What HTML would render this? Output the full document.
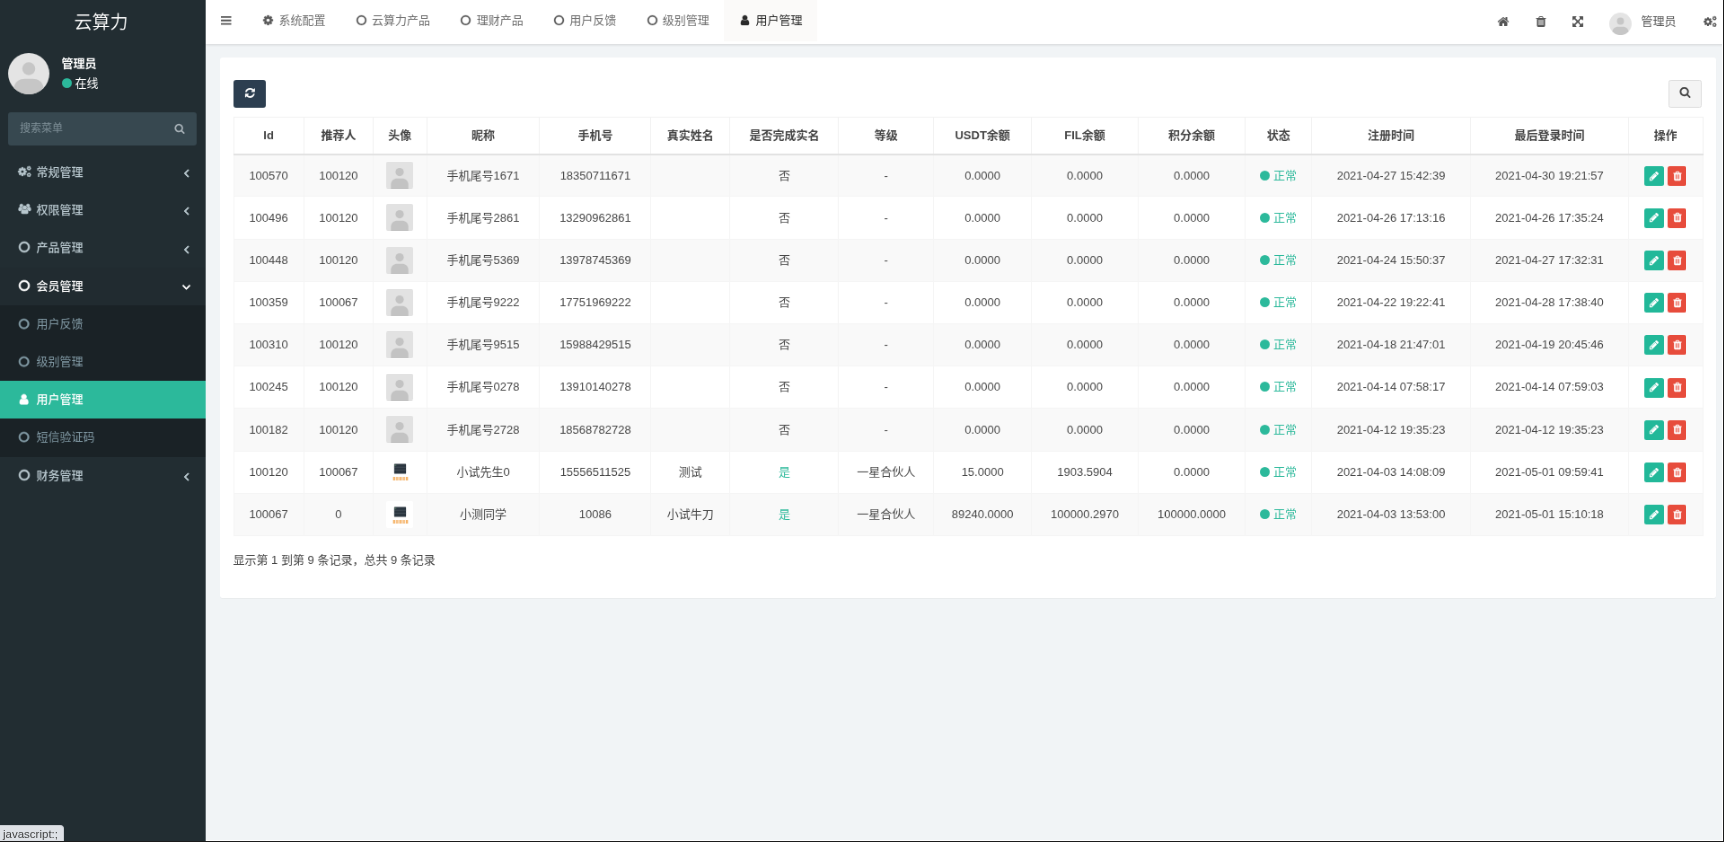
<!DOCTYPE html>
<html lang="zh-CN">
<head>
<meta charset="utf-8">
<title>云算力</title>
<style>
*{box-sizing:border-box}
html,body{margin:0;padding:0;width:1724px;height:842px;overflow:hidden;background:#f1f4f6}
body{font-family:"Liberation Sans","Noto Sans CJK SC",sans-serif;font-size:13px;line-height:1.42857;color:#444;position:relative}
ul{list-style:none;margin:0;padding:0}
a{text-decoration:none;color:inherit;cursor:pointer}
svg.ic{display:inline-block;vertical-align:middle;overflow:visible}
.smenu svg.ic{stroke:currentColor;stroke-width:70px}
.smenu .arr svg.ic{stroke-width:110px}
#stage{position:absolute;left:0;top:0;width:1926px;height:940px;transform:scale(0.898);transform-origin:0 0;overflow:hidden;will-change:transform}
/* window edges */
#edge-r{position:absolute;right:0;top:0;width:1px;height:842px;background:#1b1b1b;z-index:50}
#edge-r2{position:absolute;right:1px;top:0;width:1px;height:842px;background:#fff;z-index:49}
#edge-b{position:absolute;left:0;bottom:0;width:1724px;height:1px;background:#1b1b1b;z-index:50}
#edge-b2{position:absolute;left:206px;bottom:1px;width:1518px;height:1px;background:#fff;z-index:49}
#status{will-change:transform;position:absolute;left:0;bottom:1px;height:16px;width:64px;background:#dee1e6;border-top:1px solid #c8ccd2;border-right:1px solid #c8ccd2;border-top-right-radius:4px;font-size:11.500px;line-height:16.500px;color:#444;padding-left:3px;z-index:40;font-family:"Liberation Sans",sans-serif}

/* sidebar */
.sidebar{position:absolute;left:-1px;top:0;width:230px;height:100%;background:#222d32}
.logo{height:50px;line-height:50.5px;text-align:center;padding-right:3px;font-size:20px;font-weight:350;color:#fff;background:#222d32;font-family:"Liberation Sans","Noto Sans CJK SC",sans-serif}
.upanel{position:relative;height:65px;padding:10px}
.upanel .avr{display:block;position:absolute;left:9.7px;top:8.6px}
.upanel .info{position:absolute;left:69.5px;top:9.2px;color:#fff;line-height:1}
.upanel .info p{margin:3px 0 0 0;font-weight:600;font-size:13px;line-height:18px}
.upanel .info .on{display:block;margin-top:3.6px;font-size:13px;line-height:18px;color:#fff}
.upanel .info .on i{display:inline-block;width:11px;height:11px;border-radius:50%;background:#2cb89b;margin-right:4px;vertical-align:-1px}
.sform{margin:10px 10px 9.5px 10px;height:36.6px;border-radius:3px;background:#374850;position:relative}
.sform span.ph{position:absolute;left:13px;top:0;line-height:36.6px;font-size:12px;color:#7f9098}
.sform .ic{position:absolute;right:13px;top:11.5px;color:#a9b3b9}
.smenu li a{display:block;position:relative;height:42.2px;line-height:41.4px;padding-left:18px;color:#b8c7ce;font-size:13px;font-weight:500;white-space:nowrap}
.smenu .mi{display:inline-block;width:20px;text-align:center;line-height:1}
.smenu .mi .ic{vertical-align:-2px}
.smenu .mt{margin-left:3.5px}
.smenu .arr{position:absolute;right:15.3px;top:2.1px;line-height:42.2px;color:#b8c7ce}
.smenu .arr .ic{vertical-align:-2px;width:15px;height:15px;margin-right:-1.500px}
.smenu li.open a{background:#212b30;color:#fff}
.smenu li.open .arr{color:#fff}
.smenu li.sub a{background:#1a2226;color:#8199a4;font-weight:400}
.smenu li.sub .mi .ic{width:13.3px;height:13.3px}
.smenu li.sub.cur a{background:#2cb99b;color:#fff;font-weight:500}

/* header */
.navbar{position:absolute;left:229px;top:0;right:0;height:49.100px;background:#fff;box-shadow:0 1px 3px rgba(0,0,0,.13);z-index:5}
.toggle{position:absolute;left:0;top:0;width:45px;height:48px;text-align:center;line-height:43.6px;color:#555}
.tabs{position:absolute;left:46.5px;top:0;height:48.7px;display:flex}
.tabs li{height:48.7px}
.tabs li a{display:block;height:45.700px;line-height:45.6px;padding-left:16px;color:#6e6e6e;font-size:13px;white-space:nowrap}
.tabs li a .ic{vertical-align:-2.200px;margin-left:0.700px;margin-right:5.300px;stroke:currentColor;stroke-width:30px;color:#5a5a5a}
.tabs li.active a{background:#fbfaf9;color:#2a2a2a}
.tabs li.active a .ic{color:#2a2a2a}
.hright{position:absolute;left:0;top:0;width:100%;height:48.7px;color:#555}
.hright>a{position:absolute;display:block;top:0;height:48.7px;line-height:48.7px;white-space:nowrap;font-size:13px}
.hright>a .ic{position:absolute;top:17px;left:0}
.hright .h1{left:1437.700px;width:14px}
.hright .h2{left:1479.800px;width:14px}
.hright .h3{left:1520.500px;width:14px}
.hright .h4{left:1563px}
.hright .h4 .avr{position:absolute;left:0;top:13.900px}
.hright .h4 span{position:absolute;left:35.500px;top:0;line-height:47.400px}
.hright .h5{left:1667.700px;width:15px}

/* content */
.panel{position:absolute;left:244.500px;top:64px;width:1666.500px;height:602px;background:#fff;border-radius:3px;box-shadow:0 1px 1px rgba(0,0,0,.04)}
.btn-refresh{position:absolute;left:15.300px;top:25px;width:36px;height:31.200px;border-radius:3px;background:#2c3e50;text-align:center;line-height:28.600px;padding-left:1.200px}
.btn-search{position:absolute;right:16.200px;top:25px;width:37px;height:31.200px;border-radius:2.500px;background:#f4f4f4;border:1px solid #ddd;text-align:center;line-height:24px;padding-left:0.600px;color:#444}
.tb{position:absolute;left:15px;top:66.300px;border-collapse:collapse;table-layout:fixed;width:1636.400px;border:1px solid #f3f3f3}
.tb th{height:41px;padding:0 8px;text-align:center;font-weight:bold;color:#444;font-size:13px;border:1px solid #f2f2f2;border-bottom:2px solid #e2e2e2;white-space:nowrap;overflow:hidden}
.tb td{height:47.200px;padding:0.600px 8px 0 8px;text-align:center;color:#484848;font-size:13px;border:1px solid #f5f5f5;white-space:nowrap;overflow:hidden;vertical-align:middle}
.tb tbody tr:nth-child(odd) td{background:#f9f9f9}
.tb td.im{padding:0 0 0.5px 0;line-height:0}
.tb td.im .av{display:inline-block;vertical-align:middle;border-radius:2px}
.tb td.yes{color:#2cb99b}
.tb td.st{color:#2cb99b}
.tb td.st .dot{display:inline-block;width:11px;height:11px;border-radius:50%;background:#2cb99b;margin-right:3.500px;vertical-align:-1px}
.tb td.op{line-height:0;padding-bottom:0}
.bx{display:inline-block;width:22.200px;height:22px;border-radius:2.500px;text-align:center;line-height:20px;vertical-align:middle}
.bx .ic{vertical-align:middle}
.be{background:#22b899;margin-right:4px}
.bd{background:#e74c3c;width:21px}
.pinfo{position:absolute;left:15px;top:550.100px;line-height:20px;font-size:13px;color:#444}

</style>
</head>
<body>
<div id="stage">
  <div class="sidebar">
    <div class="logo">云算力</div>
    <div class="upanel">
      <svg class="avr" width="46" height="46" viewBox="0 0 30 30"><circle cx="15" cy="15" r="15" fill="#e4e4e4"/><circle cx="15" cy="11.400" r="4.700" fill="#c6c6c6"/><path d="M4.200 25.500c0.500-4.700 4.300-6.700 8-6.700h5.600c3.700 0 7.500 2 8 6.700A15 15 0 0 1 4.200 25.500z" fill="#c6c6c6"/></svg>
      <div class="info"><p>管理员</p><a class="on"><i></i>在线</a></div>
    </div>
    <div class="sform"><span class="ph">搜索菜单</span><svg class="ic" width="12" height="12" viewBox="0 0 1792 1792" style="" fill="currentColor" ><path d="M1216 832q0-185-131.500-316.500t-316.500-131.500-316.500 131.500-131.500 316.500 131.500 316.500 316.500 131.500 316.500-131.500 131.500-316.500zm512 832q0 52-38 90t-90 38q-54 0-90-38l-343-342q-179 124-399 124-143 0-273.500-55.500t-225-150-150-225-55.500-273.500 55.500-273.500 150-225 225-150 273.500-55.500 273.500 55.500 225 150 150 225 55.500 273.500q0 220-124 399l343 343q37 37 37 90z"/></svg></div>
    <ul class="smenu"><li class=""><a><span class="mi"><svg class="ic" width="15" height="14" viewBox="0 0 1920 1792" style="" fill="currentColor"><g transform="translate(-90 190) scale(0.80)"><path d="M1152 896q0-106-75-181t-181-75-181 75-75 181 75 181 181 75 181-75 75-181zm512-109v222q0 12-8 23t-20 13l-185 28q-19 54-39 91 35 50 107 138 10 12 10 25t-9 23q-27 37-99 108t-94 71q-12 0-26-9l-138-108q-44 23-91 38-16 136-29 186-7 28-36 28h-222q-14 0-24.500-8.500t-11.500-21.500l-28-184q-49-16-90-37l-141 107q-10 9-25 9-14 0-25-11-126-114-165-168-7-10-7-23 0-12 8-23 15-21 51-66.500t54-70.500q-27-50-41-99l-183-27q-13-2-21-12.500t-8-23.500v-222q0-12 8-23t19-13l186-28q14-46 39-92-40-57-107-138-10-12-10-24 0-10 9-23 26-36 98.500-107.500t94.500-71.500q13 0 26 10l138 107q44-23 91-38 16-136 29-186 7-28 36-28h222q14 0 24.500 8.500t11.500 21.500l28 184q49 16 90 37l142-107q9-9 24-9 13 0 25 10 129 119 165 170 7 8 7 22 0 12-8 23-15 21-51 66.500t-54 70.500q26 50 41 98l183 28q13 2 21 12.500t8 23.500z"/></g><g transform="translate(1200 60) scale(0.40)"><path d="M1152 896q0-106-75-181t-181-75-181 75-75 181 75 181 181 75 181-75 75-181zm512-109v222q0 12-8 23t-20 13l-185 28q-19 54-39 91 35 50 107 138 10 12 10 25t-9 23q-27 37-99 108t-94 71q-12 0-26-9l-138-108q-44 23-91 38-16 136-29 186-7 28-36 28h-222q-14 0-24.500-8.500t-11.500-21.500l-28-184q-49-16-90-37l-141 107q-10 9-25 9-14 0-25-11-126-114-165-168-7-10-7-23 0-12 8-23 15-21 51-66.500t54-70.500q-27-50-41-99l-183-27q-13-2-21-12.500t-8-23.500v-222q0-12 8-23t19-13l186-28q14-46 39-92-40-57-107-138-10-12-10-24 0-10 9-23 26-36 98.500-107.500t94.500-71.500q13 0 26 10l138 107q44-23 91-38 16-136 29-186 7-28 36-28h222q14 0 24.500 8.500t11.500 21.500l28 184q49 16 90 37l142-107q9-9 24-9 13 0 25 10 129 119 165 170 7 8 7 22 0 12-8 23-15 21-51 66.500t-54 70.500q26 50 41 98l183 28q13 2 21 12.500t8 23.500z"/></g><g transform="translate(1200 1010) scale(0.40)"><path d="M1152 896q0-106-75-181t-181-75-181 75-75 181 75 181 181 75 181-75 75-181zm512-109v222q0 12-8 23t-20 13l-185 28q-19 54-39 91 35 50 107 138 10 12 10 25t-9 23q-27 37-99 108t-94 71q-12 0-26-9l-138-108q-44 23-91 38-16 136-29 186-7 28-36 28h-222q-14 0-24.500-8.500t-11.500-21.500l-28-184q-49-16-90-37l-141 107q-10 9-25 9-14 0-25-11-126-114-165-168-7-10-7-23 0-12 8-23 15-21 51-66.500t54-70.500q-27-50-41-99l-183-27q-13-2-21-12.500t-8-23.500v-222q0-12 8-23t19-13l186-28q14-46 39-92-40-57-107-138-10-12-10-24 0-10 9-23 26-36 98.500-107.500t94.500-71.500q13 0 26 10l138 107q44-23 91-38 16-136 29-186 7-28 36-28h222q14 0 24.500 8.500t11.500 21.500l28 184q49 16 90 37l142-107q9-9 24-9 13 0 25 10 129 119 165 170 7 8 7 22 0 12-8 23-15 21-51 66.500t-54 70.500q26 50 41 98l183 28q13 2 21 12.500t8 23.500z"/></g></svg></span><span class="mt">常规管理</span><span class="arr"><svg class="ic" width="14" height="14" viewBox="0 0 1792 1792" style="" fill="currentColor" ><path d="M1203 544q0 13-10 23l-393 393 393 393q10 10 10 23t-10 23l-50 50q-10 10-23 10t-23-10l-466-466q-10-10-10-23t10-23l466-466q10-10 23-10t23 10l50 50q10 10 10 23z"/></svg></span></a></li><li class=""><a><span class="mi"><svg class="ic" width="15" height="14" viewBox="0 0 1920 1792" style="" fill="currentColor"><g transform="translate(-100 40) scale(0.66)"><path d="M1536 1399q0 109-62.500 187t-150.500 78h-854q-88 0-150.500-78t-62.500-187q0-85 8.500-160.500t31.500-152 58.500-131 94-89 134.500-34.500q131 128 313 128t313-128q76 0 134.500 34.500t94 89 58.500 131 31.500 152 8.500 160.500zm-256-887q0 159-112.500 271.500t-271.500 112.500-271.500-112.500-112.500-271.500 112.500-271.500 271.500-112.500 271.500 112.500 112.500 271.500z"/></g><g transform="translate(837 40) scale(0.66)"><path d="M1536 1399q0 109-62.500 187t-150.500 78h-854q-88 0-150.500-78t-62.500-187q0-85 8.500-160.500t31.500-152 58.500-131 94-89 134.500-34.500q131 128 313 128t313-128q76 0 134.500 34.500t94 89 58.500 131 31.500 152 8.500 160.500zm-256-887q0 159-112.500 271.500t-271.500 112.500-271.500-112.500-112.500-271.500 112.500-271.500 271.500-112.500 271.500 112.500 112.500 271.500z"/></g><g transform="translate(243 250) scale(0.8)"><path d="M1536 1399q0 109-62.500 187t-150.500 78h-854q-88 0-150.500-78t-62.500-187q0-85 8.500-160.500t31.500-152 58.500-131 94-89 134.500-34.500q131 128 313 128t313-128q76 0 134.500 34.500t94 89 58.500 131 31.500 152 8.500 160.500zm-256-887q0 159-112.500 271.500t-271.500 112.500-271.500-112.500-112.500-271.500 112.500-271.500 271.500-112.500 271.500 112.500 112.500 271.500z" stroke="#222d32" stroke-width="120" paint-order="stroke"/></g></svg></span><span class="mt">权限管理</span><span class="arr"><svg class="ic" width="14" height="14" viewBox="0 0 1792 1792" style="" fill="currentColor" ><path d="M1203 544q0 13-10 23l-393 393 393 393q10 10 10 23t-10 23l-50 50q-10 10-23 10t-23-10l-466-466q-10-10-10-23t10-23l466-466q10-10 23-10t23 10l50 50q10 10 10 23z"/></svg></span></a></li><li class=""><a><span class="mi"><svg class="ic" width="14" height="14" viewBox="0 0 1792 1792" style="" fill="currentColor" ><path d="M896 352q-148 0-273 73t-198 198-73 273 73 273 198 198 273 73 273-73 198-198 73-273-73-273-198-198-273-73zm768 544q0 209-103 385.500t-279.500 279.500-385.500 103-385.500-103-279.500-279.500-103-385.500 103-385.500 279.500-279.500 385.500-103 385.500 103 279.500 279.500 103 385.500z"/></svg></span><span class="mt">产品管理</span><span class="arr"><svg class="ic" width="14" height="14" viewBox="0 0 1792 1792" style="" fill="currentColor" ><path d="M1203 544q0 13-10 23l-393 393 393 393q10 10 10 23t-10 23l-50 50q-10 10-23 10t-23-10l-466-466q-10-10-10-23t10-23l466-466q10-10 23-10t23 10l50 50q10 10 10 23z"/></svg></span></a></li><li class="open"><a><span class="mi"><svg class="ic" width="14" height="14" viewBox="0 0 1792 1792" style="" fill="currentColor" ><path d="M896 352q-148 0-273 73t-198 198-73 273 73 273 198 198 273 73 273-73 198-198 73-273-73-273-198-198-273-73zm768 544q0 209-103 385.500t-279.500 279.500-385.500 103-385.500-103-279.500-279.500-103-385.500 103-385.500 279.500-279.500 385.500-103 385.500 103 279.500 279.500 103 385.500z"/></svg></span><span class="mt">会员管理</span><span class="arr"><svg class="ic" width="14" height="14" viewBox="0 0 1792 1792" style="" fill="currentColor" ><path d="M1395 736q0 13-10 23l-466 466q-10 10-23 10t-23-10l-466-466q-10-10-10-23t10-23l50-50q10-10 23-10t23 10l393 393 393-393q10-10 23-10t23 10l50 50q10 10 10 23z"/></svg></span></a></li><li class="sub"><a><span class="mi"><svg class="ic" width="14" height="14" viewBox="0 0 1792 1792" style="" fill="currentColor" ><path d="M896 352q-148 0-273 73t-198 198-73 273 73 273 198 198 273 73 273-73 198-198 73-273-73-273-198-198-273-73zm768 544q0 209-103 385.500t-279.500 279.500-385.500 103-385.500-103-279.500-279.500-103-385.500 103-385.500 279.500-279.500 385.500-103 385.500 103 279.500 279.500 103 385.500z"/></svg></span><span class="mt">用户反馈</span></a></li><li class="sub"><a><span class="mi"><svg class="ic" width="14" height="14" viewBox="0 0 1792 1792" style="" fill="currentColor" ><path d="M896 352q-148 0-273 73t-198 198-73 273 73 273 198 198 273 73 273-73 198-198 73-273-73-273-198-198-273-73zm768 544q0 209-103 385.500t-279.500 279.500-385.500 103-385.500-103-279.500-279.500-103-385.500 103-385.500 279.500-279.500 385.500-103 385.500 103 279.500 279.500 103 385.500z"/></svg></span><span class="mt">级别管理</span></a></li><li class="sub cur"><a><span class="mi"><svg class="ic" width="14" height="14" viewBox="0 0 1792 1792" style="" fill="currentColor" ><path d="M1536 1399q0 109-62.500 187t-150.500 78h-854q-88 0-150.500-78t-62.500-187q0-85 8.500-160.500t31.500-152 58.500-131 94-89 134.500-34.500q131 128 313 128t313-128q76 0 134.500 34.500t94 89 58.500 131 31.500 152 8.500 160.500zm-256-887q0 159-112.500 271.500t-271.500 112.500-271.500-112.500-112.500-271.500 112.500-271.500 271.500-112.500 271.500 112.500 112.500 271.500z"/></svg></span><span class="mt">用户管理</span></a></li><li class="sub"><a><span class="mi"><svg class="ic" width="14" height="14" viewBox="0 0 1792 1792" style="" fill="currentColor" ><path d="M896 352q-148 0-273 73t-198 198-73 273 73 273 198 198 273 73 273-73 198-198 73-273-73-273-198-198-273-73zm768 544q0 209-103 385.500t-279.500 279.500-385.500 103-385.500-103-279.500-279.500-103-385.500 103-385.500 279.500-279.500 385.500-103 385.500 103 279.500 279.500 103 385.500z"/></svg></span><span class="mt">短信验证码</span></a></li><li class=""><a><span class="mi"><svg class="ic" width="14" height="14" viewBox="0 0 1792 1792" style="" fill="currentColor" ><path d="M896 352q-148 0-273 73t-198 198-73 273 73 273 198 198 273 73 273-73 198-198 73-273-73-273-198-198-273-73zm768 544q0 209-103 385.500t-279.500 279.500-385.500 103-385.500-103-279.500-279.500-103-385.500 103-385.500 279.500-279.500 385.500-103 385.500 103 279.500 279.500 103 385.500z"/></svg></span><span class="mt">财务管理</span><span class="arr"><svg class="ic" width="14" height="14" viewBox="0 0 1792 1792" style="" fill="currentColor" ><path d="M1203 544q0 13-10 23l-393 393 393 393q10 10 10 23t-10 23l-50 50q-10 10-23 10t-23-10l-466-466q-10-10-10-23t10-23l466-466q10-10 23-10t23 10l50 50q10 10 10 23z"/></svg></span></a></li></ul>
  </div>
  <div class="navbar">
    <a class="toggle"><svg class="ic" width="13.5" height="13.5" viewBox="0 0 1792 1792" style="" fill="currentColor" ><path d="M1664 1344v128q0 26-19 45t-45 19h-1408q-26 0-45-19t-19-45v-128q0-26 19-45t45-19h1408q26 0 45 19t19 45zm0-512v128q0 26-19 45t-45 19h-1408q-26 0-45-19t-19-45v-128q0-26 19-45t45-19h1408q26 0 45 19t19 45zm0-512v128q0 26-19 45t-45 19h-1408q-26 0-45-19t-19-45v-128q0-26 19-45t45-19h1408q26 0 45 19t19 45z"/></svg></a>
    <ul class="tabs"><li class="" style="width:103.6px"><a><svg class="ic" width="13" height="13" viewBox="0 0 1792 1792" style="" fill="currentColor" ><path d="M1152 896q0-106-75-181t-181-75-181 75-75 181 75 181 181 75 181-75 75-181zm512-109v222q0 12-8 23t-20 13l-185 28q-19 54-39 91 35 50 107 138 10 12 10 25t-9 23q-27 37-99 108t-94 71q-12 0-26-9l-138-108q-44 23-91 38-16 136-29 186-7 28-36 28h-222q-14 0-24.500-8.500t-11.500-21.500l-28-184q-49-16-90-37l-141 107q-10 9-25 9-14 0-25-11-126-114-165-168-7-10-7-23 0-12 8-23 15-21 51-66.500t54-70.500q-27-50-41-99l-183-27q-13-2-21-12.500t-8-23.500v-222q0-12 8-23t19-13l186-28q14-46 39-92-40-57-107-138-10-12-10-24 0-10 9-23 26-36 98.500-107.500t94.500-71.500q13 0 26 10l138 107q44-23 91-38 16-136 29-186 7-28 36-28h222q14 0 24.500 8.500t11.500 21.500l28 184q49 16 90 37l142-107q9-9 24-9 13 0 25 10 129 119 165 170 7 8 7 22 0 12-8 23-15 21-51 66.500t-54 70.500q26 50 41 98l183 28q13 2 21 12.500t8 23.500z"/></svg><span>系统配置</span></a></li><li class="" style="width:116.6px"><a><svg class="ic" width="13" height="13" viewBox="0 0 1792 1792" style="" fill="currentColor" ><path d="M896 352q-148 0-273 73t-198 198-73 273 73 273 198 198 273 73 273-73 198-198 73-273-73-273-198-198-273-73zm768 544q0 209-103 385.500t-279.500 279.500-385.500 103-385.500-103-279.500-279.500-103-385.500 103-385.500 279.500-279.500 385.500-103 385.500 103 279.500 279.500 103 385.500z"/></svg><span>云算力产品</span></a></li><li class="" style="width:103.6px"><a><svg class="ic" width="13" height="13" viewBox="0 0 1792 1792" style="" fill="currentColor" ><path d="M896 352q-148 0-273 73t-198 198-73 273 73 273 198 198 273 73 273-73 198-198 73-273-73-273-198-198-273-73zm768 544q0 209-103 385.500t-279.500 279.500-385.500 103-385.500-103-279.500-279.500-103-385.500 103-385.500 279.500-279.500 385.500-103 385.500 103 279.500 279.500 103 385.500z"/></svg><span>理财产品</span></a></li><li class="" style="width:103.6px"><a><svg class="ic" width="13" height="13" viewBox="0 0 1792 1792" style="" fill="currentColor" ><path d="M896 352q-148 0-273 73t-198 198-73 273 73 273 198 198 273 73 273-73 198-198 73-273-73-273-198-198-273-73zm768 544q0 209-103 385.500t-279.500 279.500-385.500 103-385.500-103-279.500-279.500-103-385.500 103-385.500 279.500-279.500 385.500-103 385.500 103 279.500 279.500 103 385.500z"/></svg><span>用户反馈</span></a></li><li class="" style="width:103.6px"><a><svg class="ic" width="13" height="13" viewBox="0 0 1792 1792" style="" fill="currentColor" ><path d="M896 352q-148 0-273 73t-198 198-73 273 73 273 198 198 273 73 273-73 198-198 73-273-73-273-198-198-273-73zm768 544q0 209-103 385.500t-279.500 279.500-385.500 103-385.500-103-279.500-279.500-103-385.500 103-385.500 279.500-279.500 385.500-103 385.500 103 279.500 279.500 103 385.500z"/></svg><span>级别管理</span></a></li><li class="active" style="width:103.6px"><a><svg class="ic" width="13" height="13" viewBox="0 0 1792 1792" style="" fill="currentColor" ><path d="M1536 1399q0 109-62.500 187t-150.500 78h-854q-88 0-150.500-78t-62.500-187q0-85 8.500-160.500t31.500-152 58.500-131 94-89 134.500-34.500q131 128 313 128t313-128q76 0 134.500 34.500t94 89 58.500 131 31.500 152 8.500 160.500zm-256-887q0 159-112.500 271.500t-271.500 112.500-271.500-112.500-112.500-271.500 112.500-271.500 271.500-112.500 271.500 112.500 112.500 271.500z"/></svg><span>用户管理</span></a></li></ul>
    <div class="hright">
      <a class="h1"><svg class="ic" width="14" height="14" viewBox="0 0 1792 1792" style="" fill="currentColor" ><path d="M1472 992v480q0 26-19 45t-45 19h-384v-384h-256v384h-384q-26 0-45-19t-19-45v-480q0-1 .5-3t.5-3l575-474 575 474q1 2 1 6zm223-69l-62 74q-8 9-21 11h-3q-13 0-21-7l-692-577-692 577q-12 8-24 7-13-2-21-11l-62-74q-8-10-7-23.500t11-21.500l719-599q32-26 76-26t76 26l244 204v-195q0-14 9-23t23-9h192q14 0 23 9t9 23v408l219 182q10 8 11 21.500t-7 23.500z"/></svg></a><a class="h2"><svg class="ic" width="14" height="14" viewBox="0 0 1792 1792" style="" fill="currentColor" ><path d="M704 1376v-704q0-14-9-23t-23-9h-64q-14 0-23 9t-9 23v704q0 14 9 23t23 9h64q14 0 23-9t9-23zm256 0v-704q0-14-9-23t-23-9h-64q-14 0-23 9t-9 23v704q0 14 9 23t23 9h64q14 0 23-9t9-23zm256 0v-704q0-14-9-23t-23-9h-64q-14 0-23 9t-9 23v704q0 14 9 23t23 9h64q14 0 23-9t9-23zm-544-992h448l-48-117q-7-9-17-11h-317q-10 2-17 11zm928 32v64q0 14-9 23t-23 9h-96v948q0 83-47 143.500t-113 60.500h-832q-66 0-113-58.500t-47-141.500v-952h-96q-14 0-23-9t-9-23v-64q0-14 9-23t23-9h309l70-167q15-37 54-63t79-26h320q40 0 79 26t54 63l70 167h309q14 0 23 9t9 23z"/></svg></a><a class="h3"><svg class="ic" width="14" height="14" viewBox="0 0 1792 1792" style="" fill="currentColor" ><path d="M1411 541l-355 355 355 355 144-144q29-31 70-14 39 17 39 59v448q0 26-19 45t-45 19h-448q-42 0-59-40-17-39 14-69l144-144-355-355-355 355 144 144q31 30 14 69-17 40-59 40h-448q-26 0-45-19t-19-45v-448q0-42 40-59 39-17 69 14l144 144 355-355-355-355-144 144q-19 19-45 19-12 0-24-5-40-17-40-59v-448q0-26 19-45t45-19h448q42 0 59 40 17 39-14 69l-144 144 355 355 355-355-144-144q-31-30-14-69 17-40 59-40h448q26 0 45 19t19 45v448q0 42-39 59-13 5-25 5-26 0-45-19z"/></svg></a><a class="h4"><svg class="avr" width="25" height="25" viewBox="0 0 30 30"><circle cx="15" cy="15" r="15" fill="#e4e4e4"/><circle cx="15" cy="11.400" r="4.700" fill="#c6c6c6"/><path d="M4.200 25.500c0.500-4.700 4.300-6.700 8-6.700h5.600c3.700 0 7.500 2 8 6.700A15 15 0 0 1 4.200 25.500z" fill="#c6c6c6"/></svg><span>管理员</span></a><a class="h5"><svg class="ic" width="15" height="14" viewBox="0 0 1920 1792" style="" fill="currentColor"><g transform="translate(-90 190) scale(0.80)"><path d="M1152 896q0-106-75-181t-181-75-181 75-75 181 75 181 181 75 181-75 75-181zm512-109v222q0 12-8 23t-20 13l-185 28q-19 54-39 91 35 50 107 138 10 12 10 25t-9 23q-27 37-99 108t-94 71q-12 0-26-9l-138-108q-44 23-91 38-16 136-29 186-7 28-36 28h-222q-14 0-24.500-8.500t-11.500-21.500l-28-184q-49-16-90-37l-141 107q-10 9-25 9-14 0-25-11-126-114-165-168-7-10-7-23 0-12 8-23 15-21 51-66.500t54-70.500q-27-50-41-99l-183-27q-13-2-21-12.500t-8-23.500v-222q0-12 8-23t19-13l186-28q14-46 39-92-40-57-107-138-10-12-10-24 0-10 9-23 26-36 98.500-107.500t94.500-71.500q13 0 26 10l138 107q44-23 91-38 16-136 29-186 7-28 36-28h222q14 0 24.500 8.500t11.500 21.500l28 184q49 16 90 37l142-107q9-9 24-9 13 0 25 10 129 119 165 170 7 8 7 22 0 12-8 23-15 21-51 66.500t-54 70.500q26 50 41 98l183 28q13 2 21 12.500t8 23.500z"/></g><g transform="translate(1200 60) scale(0.40)"><path d="M1152 896q0-106-75-181t-181-75-181 75-75 181 75 181 181 75 181-75 75-181zm512-109v222q0 12-8 23t-20 13l-185 28q-19 54-39 91 35 50 107 138 10 12 10 25t-9 23q-27 37-99 108t-94 71q-12 0-26-9l-138-108q-44 23-91 38-16 136-29 186-7 28-36 28h-222q-14 0-24.500-8.500t-11.500-21.500l-28-184q-49-16-90-37l-141 107q-10 9-25 9-14 0-25-11-126-114-165-168-7-10-7-23 0-12 8-23 15-21 51-66.500t54-70.500q-27-50-41-99l-183-27q-13-2-21-12.500t-8-23.500v-222q0-12 8-23t19-13l186-28q14-46 39-92-40-57-107-138-10-12-10-24 0-10 9-23 26-36 98.500-107.500t94.500-71.500q13 0 26 10l138 107q44-23 91-38 16-136 29-186 7-28 36-28h222q14 0 24.500 8.500t11.500 21.500l28 184q49 16 90 37l142-107q9-9 24-9 13 0 25 10 129 119 165 170 7 8 7 22 0 12-8 23-15 21-51 66.500t-54 70.500q26 50 41 98l183 28q13 2 21 12.500t8 23.500z"/></g><g transform="translate(1200 1010) scale(0.40)"><path d="M1152 896q0-106-75-181t-181-75-181 75-75 181 75 181 181 75 181-75 75-181zm512-109v222q0 12-8 23t-20 13l-185 28q-19 54-39 91 35 50 107 138 10 12 10 25t-9 23q-27 37-99 108t-94 71q-12 0-26-9l-138-108q-44 23-91 38-16 136-29 186-7 28-36 28h-222q-14 0-24.500-8.500t-11.500-21.500l-28-184q-49-16-90-37l-141 107q-10 9-25 9-14 0-25-11-126-114-165-168-7-10-7-23 0-12 8-23 15-21 51-66.500t54-70.500q-27-50-41-99l-183-27q-13-2-21-12.500t-8-23.500v-222q0-12 8-23t19-13l186-28q14-46 39-92-40-57-107-138-10-12-10-24 0-10 9-23 26-36 98.500-107.500t94.500-71.500q13 0 26 10l138 107q44-23 91-38 16-136 29-186 7-28 36-28h222q14 0 24.500 8.500t11.500 21.500l28 184q49 16 90 37l142-107q9-9 24-9 13 0 25 10 129 119 165 170 7 8 7 22 0 12-8 23-15 21-51 66.500t-54 70.500q26 50 41 98l183 28q13 2 21 12.500t8 23.500z"/></g></svg></a>
    </div>
  </div>
  <div class="panel">
    <a class="btn-refresh"><svg class="ic" width="12.8" height="12.8" viewBox="0 0 1792 1792" style="" fill="#fff" ><path d="M1639 1056q0 5-1 7-64 268-268 434.500t-478 166.500q-146 0-282.500-55t-243.500-157l-129 129q-19 19-45 19t-45-19-19-45v-448q0-26 19-45t45-19h448q26 0 45 19t19 45-19 45l-137 137q71 66 161 102t187 36q134 0 250-65t186-179q11-17 53-117 8-23 30-23h192q13 0 22.500 9.500t9.500 22.500zm25-800v448q0 26-19 45t-45 19h-448q-26 0-45-19t-19-45 19-45l138-138q-148-137-349-137-134 0-250 65t-186 179q-11 17-53 117-8 23-30 23h-199q-13 0-22.500-9.500t-9.500-22.500v-7q65-268 270-434.500t480-166.500q146 0 284 55.500t245 156.500l130-129q19-19 45-19t45 19 19 45z"/></svg></a>
    <a class="btn-search"><svg class="ic" width="13" height="13" viewBox="0 0 1792 1792" style="" fill="currentColor" ><path d="M1216 832q0-185-131.500-316.500t-316.500-131.500-316.500 131.500-131.500 316.500 131.500 316.500 316.500 131.500 316.500-131.500 131.500-316.500zm512 832q0 52-38 90t-90 38q-54 0-90-38l-343-342q-179 124-399 124-143 0-273.500-55.500t-225-150-150-225-55.500-273.500 55.500-273.500 150-225 225-150 273.500-55.500 273.500 55.500 225 150 150 225 55.500 273.500q0 220-124 399l343 343q37 37 37 90z"/></svg></a>
    <table class="tb"><colgroup><col style="width:78.2px"><col style="width:77.4px"><col style="width:59.6px"><col style="width:125.8px"><col style="width:123.9px"><col style="width:88px"><col style="width:121.1px"><col style="width:105.5px"><col style="width:109.4px"><col style="width:118.3px"><col style="width:119.7px"><col style="width:73.8px"><col style="width:176.8px"><col style="width:176px"><col style="width:82.9px"></colgroup><thead><tr><th>Id</th><th>推荐人</th><th>头像</th><th>昵称</th><th>手机号</th><th>真实姓名</th><th>是否完成实名</th><th>等级</th><th>USDT余额</th><th>FIL余额</th><th>积分余额</th><th>状态</th><th>注册时间</th><th>最后登录时间</th><th>操作</th></tr></thead><tbody><tr><td>100570</td><td>100120</td><td class="im"><svg class="av" width="30" height="30" viewBox="0 0 30 30"><rect width="30" height="30" fill="#e2e2e2"/><circle cx="15" cy="11.6" r="4.6" fill="#c3c3c3"/><path d="M5.3 30v-4.5c0-4.2 3.4-6.7 7-6.7h5.4c3.6 0 7 2.500 7 6.700V30z" fill="#c3c3c3"/></svg></td><td>手机尾号1671</td><td>18350711671</td><td></td><td class="no">否</td><td>-</td><td>0.0000</td><td>0.0000</td><td>0.0000</td><td class="st"><i class="dot"></i>正常</td><td>2021-04-27 15:42:39</td><td>2021-04-30 19:21:57</td><td class="op"><a class="bx be"><svg class="ic" width="12" height="12" viewBox="0 0 1792 1792" style="" fill="#fff" ><path d="M491 1536l91-91-235-235-91 91v107h128v128h107zm523-928q0-22-22-22-10 0-17 7l-542 542q-7 7-7 17 0 22 22 22 10 0 17-7l542-542q7-7 7-17zm-54-192l416 416-832 832h-416v-416zm683 96q0 53-37 90l-166 166-416-416 166-165q36-38 90-38 53 0 91 38l235 234q37 39 37 91z"/></svg></a><a class="bx bd"><svg class="ic" width="12" height="12" viewBox="0 0 1792 1792" style="" fill="#fff" ><path d="M704 1376v-704q0-14-9-23t-23-9h-64q-14 0-23 9t-9 23v704q0 14 9 23t23 9h64q14 0 23-9t9-23zm256 0v-704q0-14-9-23t-23-9h-64q-14 0-23 9t-9 23v704q0 14 9 23t23 9h64q14 0 23-9t9-23zm256 0v-704q0-14-9-23t-23-9h-64q-14 0-23 9t-9 23v704q0 14 9 23t23 9h64q14 0 23-9t9-23zm-544-992h448l-48-117q-7-9-17-11h-317q-10 2-17 11zm928 32v64q0 14-9 23t-23 9h-96v948q0 83-47 143.500t-113 60.500h-832q-66 0-113-58.500t-47-141.500v-952h-96q-14 0-23-9t-9-23v-64q0-14 9-23t23-9h309l70-167q15-37 54-63t79-26h320q40 0 79 26t54 63l70 167h309q14 0 23 9t9 23z"/></svg></a></td></tr><tr><td>100496</td><td>100120</td><td class="im"><svg class="av" width="30" height="30" viewBox="0 0 30 30"><rect width="30" height="30" fill="#e2e2e2"/><circle cx="15" cy="11.6" r="4.6" fill="#c3c3c3"/><path d="M5.3 30v-4.5c0-4.2 3.4-6.7 7-6.7h5.4c3.6 0 7 2.500 7 6.700V30z" fill="#c3c3c3"/></svg></td><td>手机尾号2861</td><td>13290962861</td><td></td><td class="no">否</td><td>-</td><td>0.0000</td><td>0.0000</td><td>0.0000</td><td class="st"><i class="dot"></i>正常</td><td>2021-04-26 17:13:16</td><td>2021-04-26 17:35:24</td><td class="op"><a class="bx be"><svg class="ic" width="12" height="12" viewBox="0 0 1792 1792" style="" fill="#fff" ><path d="M491 1536l91-91-235-235-91 91v107h128v128h107zm523-928q0-22-22-22-10 0-17 7l-542 542q-7 7-7 17 0 22 22 22 10 0 17-7l542-542q7-7 7-17zm-54-192l416 416-832 832h-416v-416zm683 96q0 53-37 90l-166 166-416-416 166-165q36-38 90-38 53 0 91 38l235 234q37 39 37 91z"/></svg></a><a class="bx bd"><svg class="ic" width="12" height="12" viewBox="0 0 1792 1792" style="" fill="#fff" ><path d="M704 1376v-704q0-14-9-23t-23-9h-64q-14 0-23 9t-9 23v704q0 14 9 23t23 9h64q14 0 23-9t9-23zm256 0v-704q0-14-9-23t-23-9h-64q-14 0-23 9t-9 23v704q0 14 9 23t23 9h64q14 0 23-9t9-23zm256 0v-704q0-14-9-23t-23-9h-64q-14 0-23 9t-9 23v704q0 14 9 23t23 9h64q14 0 23-9t9-23zm-544-992h448l-48-117q-7-9-17-11h-317q-10 2-17 11zm928 32v64q0 14-9 23t-23 9h-96v948q0 83-47 143.500t-113 60.500h-832q-66 0-113-58.500t-47-141.500v-952h-96q-14 0-23-9t-9-23v-64q0-14 9-23t23-9h309l70-167q15-37 54-63t79-26h320q40 0 79 26t54 63l70 167h309q14 0 23 9t9 23z"/></svg></a></td></tr><tr><td>100448</td><td>100120</td><td class="im"><svg class="av" width="30" height="30" viewBox="0 0 30 30"><rect width="30" height="30" fill="#e2e2e2"/><circle cx="15" cy="11.6" r="4.6" fill="#c3c3c3"/><path d="M5.3 30v-4.5c0-4.2 3.4-6.7 7-6.7h5.4c3.6 0 7 2.500 7 6.700V30z" fill="#c3c3c3"/></svg></td><td>手机尾号5369</td><td>13978745369</td><td></td><td class="no">否</td><td>-</td><td>0.0000</td><td>0.0000</td><td>0.0000</td><td class="st"><i class="dot"></i>正常</td><td>2021-04-24 15:50:37</td><td>2021-04-27 17:32:31</td><td class="op"><a class="bx be"><svg class="ic" width="12" height="12" viewBox="0 0 1792 1792" style="" fill="#fff" ><path d="M491 1536l91-91-235-235-91 91v107h128v128h107zm523-928q0-22-22-22-10 0-17 7l-542 542q-7 7-7 17 0 22 22 22 10 0 17-7l542-542q7-7 7-17zm-54-192l416 416-832 832h-416v-416zm683 96q0 53-37 90l-166 166-416-416 166-165q36-38 90-38 53 0 91 38l235 234q37 39 37 91z"/></svg></a><a class="bx bd"><svg class="ic" width="12" height="12" viewBox="0 0 1792 1792" style="" fill="#fff" ><path d="M704 1376v-704q0-14-9-23t-23-9h-64q-14 0-23 9t-9 23v704q0 14 9 23t23 9h64q14 0 23-9t9-23zm256 0v-704q0-14-9-23t-23-9h-64q-14 0-23 9t-9 23v704q0 14 9 23t23 9h64q14 0 23-9t9-23zm256 0v-704q0-14-9-23t-23-9h-64q-14 0-23 9t-9 23v704q0 14 9 23t23 9h64q14 0 23-9t9-23zm-544-992h448l-48-117q-7-9-17-11h-317q-10 2-17 11zm928 32v64q0 14-9 23t-23 9h-96v948q0 83-47 143.500t-113 60.500h-832q-66 0-113-58.500t-47-141.500v-952h-96q-14 0-23-9t-9-23v-64q0-14 9-23t23-9h309l70-167q15-37 54-63t79-26h320q40 0 79 26t54 63l70 167h309q14 0 23 9t9 23z"/></svg></a></td></tr><tr><td>100359</td><td>100067</td><td class="im"><svg class="av" width="30" height="30" viewBox="0 0 30 30"><rect width="30" height="30" fill="#e2e2e2"/><circle cx="15" cy="11.6" r="4.6" fill="#c3c3c3"/><path d="M5.3 30v-4.5c0-4.2 3.4-6.7 7-6.7h5.4c3.6 0 7 2.500 7 6.700V30z" fill="#c3c3c3"/></svg></td><td>手机尾号9222</td><td>17751969222</td><td></td><td class="no">否</td><td>-</td><td>0.0000</td><td>0.0000</td><td>0.0000</td><td class="st"><i class="dot"></i>正常</td><td>2021-04-22 19:22:41</td><td>2021-04-28 17:38:40</td><td class="op"><a class="bx be"><svg class="ic" width="12" height="12" viewBox="0 0 1792 1792" style="" fill="#fff" ><path d="M491 1536l91-91-235-235-91 91v107h128v128h107zm523-928q0-22-22-22-10 0-17 7l-542 542q-7 7-7 17 0 22 22 22 10 0 17-7l542-542q7-7 7-17zm-54-192l416 416-832 832h-416v-416zm683 96q0 53-37 90l-166 166-416-416 166-165q36-38 90-38 53 0 91 38l235 234q37 39 37 91z"/></svg></a><a class="bx bd"><svg class="ic" width="12" height="12" viewBox="0 0 1792 1792" style="" fill="#fff" ><path d="M704 1376v-704q0-14-9-23t-23-9h-64q-14 0-23 9t-9 23v704q0 14 9 23t23 9h64q14 0 23-9t9-23zm256 0v-704q0-14-9-23t-23-9h-64q-14 0-23 9t-9 23v704q0 14 9 23t23 9h64q14 0 23-9t9-23zm256 0v-704q0-14-9-23t-23-9h-64q-14 0-23 9t-9 23v704q0 14 9 23t23 9h64q14 0 23-9t9-23zm-544-992h448l-48-117q-7-9-17-11h-317q-10 2-17 11zm928 32v64q0 14-9 23t-23 9h-96v948q0 83-47 143.500t-113 60.500h-832q-66 0-113-58.500t-47-141.500v-952h-96q-14 0-23-9t-9-23v-64q0-14 9-23t23-9h309l70-167q15-37 54-63t79-26h320q40 0 79 26t54 63l70 167h309q14 0 23 9t9 23z"/></svg></a></td></tr><tr><td>100310</td><td>100120</td><td class="im"><svg class="av" width="30" height="30" viewBox="0 0 30 30"><rect width="30" height="30" fill="#e2e2e2"/><circle cx="15" cy="11.6" r="4.6" fill="#c3c3c3"/><path d="M5.3 30v-4.5c0-4.2 3.4-6.7 7-6.7h5.4c3.6 0 7 2.500 7 6.700V30z" fill="#c3c3c3"/></svg></td><td>手机尾号9515</td><td>15988429515</td><td></td><td class="no">否</td><td>-</td><td>0.0000</td><td>0.0000</td><td>0.0000</td><td class="st"><i class="dot"></i>正常</td><td>2021-04-18 21:47:01</td><td>2021-04-19 20:45:46</td><td class="op"><a class="bx be"><svg class="ic" width="12" height="12" viewBox="0 0 1792 1792" style="" fill="#fff" ><path d="M491 1536l91-91-235-235-91 91v107h128v128h107zm523-928q0-22-22-22-10 0-17 7l-542 542q-7 7-7 17 0 22 22 22 10 0 17-7l542-542q7-7 7-17zm-54-192l416 416-832 832h-416v-416zm683 96q0 53-37 90l-166 166-416-416 166-165q36-38 90-38 53 0 91 38l235 234q37 39 37 91z"/></svg></a><a class="bx bd"><svg class="ic" width="12" height="12" viewBox="0 0 1792 1792" style="" fill="#fff" ><path d="M704 1376v-704q0-14-9-23t-23-9h-64q-14 0-23 9t-9 23v704q0 14 9 23t23 9h64q14 0 23-9t9-23zm256 0v-704q0-14-9-23t-23-9h-64q-14 0-23 9t-9 23v704q0 14 9 23t23 9h64q14 0 23-9t9-23zm256 0v-704q0-14-9-23t-23-9h-64q-14 0-23 9t-9 23v704q0 14 9 23t23 9h64q14 0 23-9t9-23zm-544-992h448l-48-117q-7-9-17-11h-317q-10 2-17 11zm928 32v64q0 14-9 23t-23 9h-96v948q0 83-47 143.500t-113 60.500h-832q-66 0-113-58.500t-47-141.500v-952h-96q-14 0-23-9t-9-23v-64q0-14 9-23t23-9h309l70-167q15-37 54-63t79-26h320q40 0 79 26t54 63l70 167h309q14 0 23 9t9 23z"/></svg></a></td></tr><tr><td>100245</td><td>100120</td><td class="im"><svg class="av" width="30" height="30" viewBox="0 0 30 30"><rect width="30" height="30" fill="#e2e2e2"/><circle cx="15" cy="11.6" r="4.6" fill="#c3c3c3"/><path d="M5.3 30v-4.5c0-4.2 3.4-6.7 7-6.7h5.4c3.6 0 7 2.500 7 6.700V30z" fill="#c3c3c3"/></svg></td><td>手机尾号0278</td><td>13910140278</td><td></td><td class="no">否</td><td>-</td><td>0.0000</td><td>0.0000</td><td>0.0000</td><td class="st"><i class="dot"></i>正常</td><td>2021-04-14 07:58:17</td><td>2021-04-14 07:59:03</td><td class="op"><a class="bx be"><svg class="ic" width="12" height="12" viewBox="0 0 1792 1792" style="" fill="#fff" ><path d="M491 1536l91-91-235-235-91 91v107h128v128h107zm523-928q0-22-22-22-10 0-17 7l-542 542q-7 7-7 17 0 22 22 22 10 0 17-7l542-542q7-7 7-17zm-54-192l416 416-832 832h-416v-416zm683 96q0 53-37 90l-166 166-416-416 166-165q36-38 90-38 53 0 91 38l235 234q37 39 37 91z"/></svg></a><a class="bx bd"><svg class="ic" width="12" height="12" viewBox="0 0 1792 1792" style="" fill="#fff" ><path d="M704 1376v-704q0-14-9-23t-23-9h-64q-14 0-23 9t-9 23v704q0 14 9 23t23 9h64q14 0 23-9t9-23zm256 0v-704q0-14-9-23t-23-9h-64q-14 0-23 9t-9 23v704q0 14 9 23t23 9h64q14 0 23-9t9-23zm256 0v-704q0-14-9-23t-23-9h-64q-14 0-23 9t-9 23v704q0 14 9 23t23 9h64q14 0 23-9t9-23zm-544-992h448l-48-117q-7-9-17-11h-317q-10 2-17 11zm928 32v64q0 14-9 23t-23 9h-96v948q0 83-47 143.500t-113 60.500h-832q-66 0-113-58.500t-47-141.500v-952h-96q-14 0-23-9t-9-23v-64q0-14 9-23t23-9h309l70-167q15-37 54-63t79-26h320q40 0 79 26t54 63l70 167h309q14 0 23 9t9 23z"/></svg></a></td></tr><tr><td>100182</td><td>100120</td><td class="im"><svg class="av" width="30" height="30" viewBox="0 0 30 30"><rect width="30" height="30" fill="#e2e2e2"/><circle cx="15" cy="11.6" r="4.6" fill="#c3c3c3"/><path d="M5.3 30v-4.5c0-4.2 3.4-6.7 7-6.7h5.4c3.6 0 7 2.500 7 6.700V30z" fill="#c3c3c3"/></svg></td><td>手机尾号2728</td><td>18568782728</td><td></td><td class="no">否</td><td>-</td><td>0.0000</td><td>0.0000</td><td>0.0000</td><td class="st"><i class="dot"></i>正常</td><td>2021-04-12 19:35:23</td><td>2021-04-12 19:35:23</td><td class="op"><a class="bx be"><svg class="ic" width="12" height="12" viewBox="0 0 1792 1792" style="" fill="#fff" ><path d="M491 1536l91-91-235-235-91 91v107h128v128h107zm523-928q0-22-22-22-10 0-17 7l-542 542q-7 7-7 17 0 22 22 22 10 0 17-7l542-542q7-7 7-17zm-54-192l416 416-832 832h-416v-416zm683 96q0 53-37 90l-166 166-416-416 166-165q36-38 90-38 53 0 91 38l235 234q37 39 37 91z"/></svg></a><a class="bx bd"><svg class="ic" width="12" height="12" viewBox="0 0 1792 1792" style="" fill="#fff" ><path d="M704 1376v-704q0-14-9-23t-23-9h-64q-14 0-23 9t-9 23v704q0 14 9 23t23 9h64q14 0 23-9t9-23zm256 0v-704q0-14-9-23t-23-9h-64q-14 0-23 9t-9 23v704q0 14 9 23t23 9h64q14 0 23-9t9-23zm256 0v-704q0-14-9-23t-23-9h-64q-14 0-23 9t-9 23v704q0 14 9 23t23 9h64q14 0 23-9t9-23zm-544-992h448l-48-117q-7-9-17-11h-317q-10 2-17 11zm928 32v64q0 14-9 23t-23 9h-96v948q0 83-47 143.500t-113 60.500h-832q-66 0-113-58.500t-47-141.500v-952h-96q-14 0-23-9t-9-23v-64q0-14 9-23t23-9h309l70-167q15-37 54-63t79-26h320q40 0 79 26t54 63l70 167h309q14 0 23 9t9 23z"/></svg></a></td></tr><tr><td>100120</td><td>100067</td><td class="im"><svg class="av" width="30" height="30" viewBox="0 0 30 30"><rect width="30" height="30" fill="#fff"/><rect x="8.900" y="6.500" width="13.200" height="11" rx="0.600" fill="#2b3640"/><rect x="8.900" y="9.800" width="13.200" height="0.700" fill="#4c5761"/><rect x="8.900" y="13.300" width="13.200" height="0.700" fill="#4c5761"/><rect x="9.300" y="7.600" width="2" height="1" fill="#5d8a6a"/><rect x="7.700" y="21" width="2.200" height="4" fill="#f6b469"/><rect x="10.700" y="21" width="3" height="4" fill="#f8c388"/><rect x="14.500" y="21" width="3" height="4" fill="#f7bb78"/><rect x="18.300" y="21" width="3" height="4" fill="#f8c388"/><rect x="22" y="21" width="2.300" height="4" fill="#f6b469"/></svg></td><td>小试先生0</td><td>15556511525</td><td>测试</td><td class="yes">是</td><td>一星合伙人</td><td>15.0000</td><td>1903.5904</td><td>0.0000</td><td class="st"><i class="dot"></i>正常</td><td>2021-04-03 14:08:09</td><td>2021-05-01 09:59:41</td><td class="op"><a class="bx be"><svg class="ic" width="12" height="12" viewBox="0 0 1792 1792" style="" fill="#fff" ><path d="M491 1536l91-91-235-235-91 91v107h128v128h107zm523-928q0-22-22-22-10 0-17 7l-542 542q-7 7-7 17 0 22 22 22 10 0 17-7l542-542q7-7 7-17zm-54-192l416 416-832 832h-416v-416zm683 96q0 53-37 90l-166 166-416-416 166-165q36-38 90-38 53 0 91 38l235 234q37 39 37 91z"/></svg></a><a class="bx bd"><svg class="ic" width="12" height="12" viewBox="0 0 1792 1792" style="" fill="#fff" ><path d="M704 1376v-704q0-14-9-23t-23-9h-64q-14 0-23 9t-9 23v704q0 14 9 23t23 9h64q14 0 23-9t9-23zm256 0v-704q0-14-9-23t-23-9h-64q-14 0-23 9t-9 23v704q0 14 9 23t23 9h64q14 0 23-9t9-23zm256 0v-704q0-14-9-23t-23-9h-64q-14 0-23 9t-9 23v704q0 14 9 23t23 9h64q14 0 23-9t9-23zm-544-992h448l-48-117q-7-9-17-11h-317q-10 2-17 11zm928 32v64q0 14-9 23t-23 9h-96v948q0 83-47 143.500t-113 60.500h-832q-66 0-113-58.500t-47-141.500v-952h-96q-14 0-23-9t-9-23v-64q0-14 9-23t23-9h309l70-167q15-37 54-63t79-26h320q40 0 79 26t54 63l70 167h309q14 0 23 9t9 23z"/></svg></a></td></tr><tr><td>100067</td><td>0</td><td class="im"><svg class="av" width="30" height="30" viewBox="0 0 30 30"><rect width="30" height="30" fill="#fff"/><rect x="8.900" y="6.500" width="13.200" height="11" rx="0.600" fill="#2b3640"/><rect x="8.900" y="9.800" width="13.200" height="0.700" fill="#4c5761"/><rect x="8.900" y="13.300" width="13.200" height="0.700" fill="#4c5761"/><rect x="9.300" y="7.600" width="2" height="1" fill="#5d8a6a"/><rect x="7.700" y="21" width="2.200" height="4" fill="#f6b469"/><rect x="10.700" y="21" width="3" height="4" fill="#f8c388"/><rect x="14.500" y="21" width="3" height="4" fill="#f7bb78"/><rect x="18.300" y="21" width="3" height="4" fill="#f8c388"/><rect x="22" y="21" width="2.300" height="4" fill="#f6b469"/></svg></td><td>小测同学</td><td>10086</td><td>小试牛刀</td><td class="yes">是</td><td>一星合伙人</td><td>89240.0000</td><td>100000.2970</td><td>100000.0000</td><td class="st"><i class="dot"></i>正常</td><td>2021-04-03 13:53:00</td><td>2021-05-01 15:10:18</td><td class="op"><a class="bx be"><svg class="ic" width="12" height="12" viewBox="0 0 1792 1792" style="" fill="#fff" ><path d="M491 1536l91-91-235-235-91 91v107h128v128h107zm523-928q0-22-22-22-10 0-17 7l-542 542q-7 7-7 17 0 22 22 22 10 0 17-7l542-542q7-7 7-17zm-54-192l416 416-832 832h-416v-416zm683 96q0 53-37 90l-166 166-416-416 166-165q36-38 90-38 53 0 91 38l235 234q37 39 37 91z"/></svg></a><a class="bx bd"><svg class="ic" width="12" height="12" viewBox="0 0 1792 1792" style="" fill="#fff" ><path d="M704 1376v-704q0-14-9-23t-23-9h-64q-14 0-23 9t-9 23v704q0 14 9 23t23 9h64q14 0 23-9t9-23zm256 0v-704q0-14-9-23t-23-9h-64q-14 0-23 9t-9 23v704q0 14 9 23t23 9h64q14 0 23-9t9-23zm256 0v-704q0-14-9-23t-23-9h-64q-14 0-23 9t-9 23v704q0 14 9 23t23 9h64q14 0 23-9t9-23zm-544-992h448l-48-117q-7-9-17-11h-317q-10 2-17 11zm928 32v64q0 14-9 23t-23 9h-96v948q0 83-47 143.500t-113 60.500h-832q-66 0-113-58.500t-47-141.500v-952h-96q-14 0-23-9t-9-23v-64q0-14 9-23t23-9h309l70-167q15-37 54-63t79-26h320q40 0 79 26t54 63l70 167h309q14 0 23 9t9 23z"/></svg></a></td></tr></tbody></table>
    <div class="pinfo">显示第 1 到第 9 条记录，总共 9 条记录</div>
  </div>
</div>
<div id="edge-r2"></div><div id="edge-r"></div><div id="edge-b2"></div><div id="edge-b"></div>
<div id="status">javascript:;</div>

</body>
</html>
